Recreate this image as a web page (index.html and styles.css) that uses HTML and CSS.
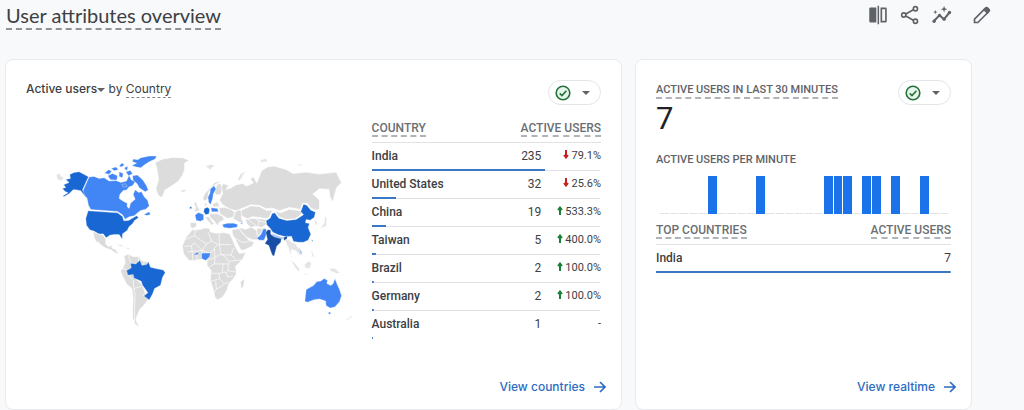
FILE: index.html
```html
<!DOCTYPE html>
<html lang="en">
<head>
<meta charset="utf-8">
<title>User attributes overview</title>
<meta name="viewport" content="width=device-width, initial-scale=1">
<link rel="stylesheet" href="styles.css">
</head>
<body>
<div class="page">
  <header class="page-header">
    <h1 class="page-title">User attributes overview</h1>
    <div class="toolbar">
      <button class="icon-button" type="button" aria-label="Edit comparisons">
        <svg viewBox="0 0 24 24"><path d="M3 3h7v18H3a1.500 1.500 0 0 1-1.500-1.500v-15A1.500 1.500 0 0 1 3 3zM11.500 1h1.800v22h-1.800zM15 3h6a1.500 1.500 0 0 1 1.500 1.500v15A1.500 1.500 0 0 1 21 21h-6zm2 2v14h3.500V5z"/></svg>
      </button>
      <button class="icon-button" type="button" aria-label="Share this report">
        <svg viewBox="0 0 24 24" class="line-icon"><circle cx="18.500" cy="4.500" r="2.500"/><circle cx="4.500" cy="12" r="2.500"/><circle cx="18.500" cy="19.500" r="2.500"/><path d="M7 10.800l9-5M7 13.200l9 5"/></svg>
      </button>
      <button class="icon-button" type="button" aria-label="Insights">
        <svg viewBox="0 0 24 24"><path d="M2 19.500L9 12.500l5.500 4.500L21 9" fill="none" stroke="currentColor" stroke-width="2.400"/><circle cx="2.500" cy="19.500" r="2"/><circle cx="9" cy="12.500" r="2"/><circle cx="14.500" cy="17" r="2"/><circle cx="21" cy="9" r="2"/><path d="M14.500 1l1 3 3 1-3 1-1 3-1-3-3-1 3-1zM4 6l.7 1.800 1.800.7-1.800.7L4 11l-.7-1.800-1.800-.7 1.800-.7z"/></svg>
      </button>
      <button class="icon-button icon-button-edit" type="button" aria-label="Customize report">
        <svg viewBox="0 0 24 24" class="line-icon"><path d="M3 21v-4L16.500 3.500a1.500 1.500 0 0 1 2 0l2 2a1.500 1.500 0 0 1 0 2L7 21z"/><path d="M14.500 5.500l4 4 2-3-3-3z" fill="currentColor"/></svg>
      </button>
    </div>
  </header>

  <main class="cards">
    <section class="card">
      <div class="card-head">
        <h2 class="card-title"><button class="metric-button" type="button">Active users<span class="caret"></span></button> by <span class="hint">Country</span></h2>
        <button class="status-button" type="button" aria-label="Data quality">
          <svg viewBox="0 0 16 16" class="check"><circle cx="8" cy="8" r="6.800"/><path d="M4.700 8.300l2.300 2.200 4.400-4.700"/></svg>
          <span class="caret"></span>
        </button>
      </div>
      <div class="country-body">
        <svg class="map" viewBox="27 121 325 224" role="img" aria-label="Active users by country">
          <!-- North America -->
          <g transform="translate(50 145) scale(.3333)">
            <path class="land faint" d="M22 88L30 84 38 94 46 98 36 108 24 102Z"/>
            <path class="strong" d="M62 88L75 82 90 80 118 95 100 135 114 150 110 156 95 137 80 134 72 134 60 146 44 155 42 152 57 143 48 139 40 130 50 127 44 119 60 112 50 103 64 100Z"/>
            <path class="mid" d="M120 96L135 94 150 100 165 98 180 108 200 106 215 112 232 108 240 90 246 104 258 110 250 122 240 125 232 135 222 136 212 148 210 160 222 168 234 174 234 185 240 190 244 174 258 162 252 148 258 134 268 142 277 140 285 155 295 165 300 182 290 192 274 196 264 204 255 212 240 215 228 222 220 209 205 199 175 197 125 193 118 180 114 160 106 148 102 136Z"/>
            <path class="mid" d="M250 92L264 90 274 98 282 106 292 122 297 135 288 140 270 128 264 116 252 106ZM248 62L262 54 250 50 252 42 266 44 275 38 300 33 322 33 318 42 300 50 285 60 275 68 262 66ZM176 92L190 85 205 92 203 105 184 104ZM166 84L178 74 188 78 180 88ZM210 80L222 85 220 98 210 94ZM230 80L244 76 250 86 238 92ZM186 70L200 66 208 73 196 77ZM210 62L219 54 226 60 216 66ZM228 66L236 64 234 76 226 72ZM218 118L230 116 234 124 222 126ZM284 208L300 200 304 208 292 211Z"/>
            <path class="strong" d="M117 197L205 203 220 214 224 227 238 226 252 218 262 212 268 218 256 226 250 236 240 244 234 256 220 266 219 282 210 268 195 268 182 270 171 278 162 266 148 267 135 258 122 254 112 240 110 220Z"/>
          </g>
          <!-- Central and South America -->
          <g transform="translate(90 235) scale(.3333)">
            <path class="land" d="M12-12L28-4 42 0 50 12 50 26 58 34 70 30 68 38 78 42 88 54 80 54 66 44 50 39 36 30 24 18 22 24 14 4ZM80 28L94 28 108 36 96 34ZM112 36L122 38 120 42 112 41Z"/>
            <path class="land" d="M104 62L118 56 130 64 150 64 156 76 180 80 180 96 140 120 140 130 160 150 170 180 178 190 172 200 162 212 152 222 146 236 140 250 144 264 152 274 138 268 130 248 130 220 132 190 128 160 112 146 100 122 94 108 102 96 108 80Z"/>
            <path class="border" d="M118 58L122 76 128 88M98 98L116 106M116 118L132 136 134 160 138 180 136 220 136 262M134 160L160 152M148 66L148 80M164 78V90M160 178L170 184"/>
            <path class="strong" d="M112 106L126 98 124 84 140 86 152 75 158 90 172 88 178 80 184 96 200 100 222 104 228 112 220 126 214 150 196 160 190 176 180 194 164 182 176 172 166 158 160 150 156 138 134 128 132 118 116 120Z"/>
          </g>
          <!-- Greenland and northern Europe -->
          <g transform="translate(150 145) scale(.3333)">
            <path class="land" d="M18 52L40 42 70 37 100 38 120 46 106 54 106 74 100 90 88 108 68 122 48 134 38 158 26 150 20 130 28 104 24 76Z"/>
            <path class="land faint" d="M92 136L106 132 112 138 98 142ZM168 62L185 58 198 60 182 74Z"/>
            <path class="land" d="M134 176L140 168 144 182 152 196 134 200 140 188ZM160 160L166 146 180 130 196 112 216 108 200 118 186 126 178 142 176 160 166 168ZM202 120L212 114 220 130 214 148 200 150 196 142ZM166 172L172 174 172 184 166 182Z"/>
            <path class="mid" d="M183 132L194 122 200 132 192 146 190 160 184 178 178 172 176 156 182 144Z"/>
            <path class="strong" d="M121 186L127 184 127 190 121 191Z"/>
          </g>
          <!-- Africa, Europe and the Middle East -->
          <g transform="translate(175 205) scale(.3333)">
            <path class="land" d="M48 52L66 52 68 62 56 70 48 66ZM92 36L104 34 112 48 120 56 112 60 98 44ZM104 26L130 26 146 34 150 44 134 52 130 62 118 46 108 38ZM134 8L150 6 170 12 184 24 178 36 160 40 150 34 136 26ZM114-4L130-10 136 4 118 6ZM180 20L196 14 212 20 200 36 208 52 196 52 176 40Z"/>
            <path class="land" d="M172 74L192 70 206 84 222 104 240 112 232 124 206 136 198 132 186 108 176 92ZM192 66L212 72 232 66 252 80 250 104 234 104 216 96 204 84Z"/>
            <path class="land" d="M54 74L72 74 94 68 106 70 108 80 126 84 148 82 166 86 172 98 184 126 194 144 214 142 206 160 184 184 186 206 176 222 164 234 158 254 146 274 130 284 122 276 116 250 108 226 110 196 98 180 98 166 90 160 60 166 44 166 28 146 24 122 34 98Z"/>
            <path class="land" d="M198 230L211 220 208 242 200 252Z"/>
            <path class="border" d="M64 74L60 92 30 104M60 92L96 116 112 108 102 82M112 108L136 120 134 86M136 118H170M30 124L52 122 60 112 84 136 96 116M84 136L82 160M52 122L56 166M68 140V166M40 140L60 138 84 136 108 144 120 130 130 118M120 130L122 156 136 148 148 150M136 120L140 148 170 150 178 128M98 166L122 156M148 150L164 168 200 164M164 168L160 196 182 200M122 156L120 176 106 184M120 176H160M108 204H134L136 220 110 228M134 204L156 200 160 216 176 212M136 220L150 236 162 230M124 228L126 252 140 244 150 236M126 252L118 262M146 176L144 202M170 150L184 160M178 96L204 112M204 112L226 108"/>
            <path class="mid" d="M62 30L72 22 88 28 88 44 78 48 66 46ZM110 8L130 10 132 20 112 20ZM144 58L160 54 178 54 190 58 188 66 166 69 148 67ZM198 53H205L203 58ZM82 144L108 143 106 154 94 166 82 160Z"/>
            <path class="mid" d="M58 150L64 144 71 140 73 147Z"/>
            <path class="strong" d="M90 10L100 6 106 12 104 26 94 29 88 20Z"/>
          </g>
          <!-- Asia -->
          <g transform="translate(240 150) scale(.3333)">
            <path class="land" d="M-54 110L-48 100-32 106-40 118-26 114-10 104 10 100 22 108 42 98 32 86 42 80 52 98 58 84 66 62 86 50 104 48 140 58 160 70 200 66 240 72 290 66 306 98 292 112 286 130 280 156 272 142 268 118 240 116 220 132 240 150 240 178 228 180 214 174 204 160 188 160 184 178 150 172 120 182 100 174 80 176 60 166 34 164 10 174-10 182-30 176-50 164-60 150-50 130Z"/>
            <path class="land faint" d="M-6 90L2 72 22 62 12 74 2 92ZM62 30L80 25 86 34 66 37ZM168 43L188 42 186 48ZM256 196L262 204 260 228 242 236 254 218ZM224 208L232 214 234 224 228 226Z"/>
            <path class="land" d="M4 182L34 167 60 169 80 180 100 180 92 196 84 206 60 202 40 200 24 206 8 198ZM106 182L124 188 150 177 186 182 188 190 168 206 140 208 118 200ZM18 208L38 204 60 206 80 208 80 224 66 232 50 228 34 232 22 220ZM52 234L72 234 60 256 52 252Z"/>
            <path class="border" d="M24 206L50 226M40 200L60 214 80 216M60 206L56 228"/>
            <path class="strong" d="M80 212L92 204 98 190 106 188 118 204 142 211 170 208 192 194 184 184 192 162 202 165 214 180 228 186 224 202 212 210 200 208 198 218 210 220 206 232 214 252 206 270 192 276 178 276 162 274 156 258 140 260 116 254 100 246 92 234 82 224ZM216 268L220 270 218 276Z"/>
            <path class="light" d="M97 250L126 261 134 262 124 269 102 261Z"/>
            <path class="mid" d="M52 264L64 254 72 236 80 236 82 250 74 270 60 270Z"/>
            <path class="dark" d="M79 246L86 238 94 240 94 252 104 260 126 266 124 276 112 288 104 318 98 314 88 286 76 280 84 268ZM132 262L144 257 142 268 134 272Z"/>
          </g>
          <!-- South-east Asia and Oceania -->
          <g transform="translate(220 230) scale(.3333)">
            <path class="land faint" d="M196 30L206 26 216 36 228 40 236 52 246 66 240 76 230 62 216 58 214 76 222 88 214 80 208 56ZM212 88L226 98 240 116 240 126 228 114ZM254 104L266 92 276 98 272 114 258 114ZM240 128L262 130 262 134ZM328 114L346 114 362 128 352 130 336 124ZM274 60L280 66 286 84 278 78ZM406 238L418 242 408 252ZM378 268L400 254 398 260 382 270Z"/>
            <path class="light" d="M238 52L248 66 244 76 242 66Z"/>
            <path class="mid" d="M260 178L282 166 292 154 304 152 314 145 324 150 322 160 334 166 341 160 346 145 352 160 360 178 366 196 360 214 346 230 332 233 320 226 318 212 300 206 284 208 264 216 256 213 258 196ZM326 246H334L332 252H328Z"/>
          </g>
        </svg>

        <table class="data-table">
          <thead>
            <tr><th scope="col"><span class="hint">COUNTRY</span></th><th scope="col" colspan="2" class="num"><span class="hint">ACTIVE USERS</span></th></tr>
          </thead>
          <tbody>
            <tr style="--share:76%"><th scope="row">India</th><td class="num">235</td><td class="change"><svg class="down" viewBox="0 0 6 9"><path d="M3 0v7M1 5l2 2.500L5 5"/></svg>79.1%</td></tr>
            <tr style="--share:10.5%"><th scope="row">United States</th><td class="num">32</td><td class="change"><svg class="down" viewBox="0 0 6 9"><path d="M3 0v7M1 5l2 2.500L5 5"/></svg>25.6%</td></tr>
            <tr style="--share:6.2%"><th scope="row">China</th><td class="num">19</td><td class="change"><svg class="up" viewBox="0 0 6 9"><path d="M3 9V2M1 4l2-2.500L5 4"/></svg>533.3%</td></tr>
            <tr style="--share:1.7%"><th scope="row">Taiwan</th><td class="num">5</td><td class="change"><svg class="up" viewBox="0 0 6 9"><path d="M3 9V2M1 4l2-2.500L5 4"/></svg>400.0%</td></tr>
            <tr style="--share:0.8%"><th scope="row">Brazil</th><td class="num">2</td><td class="change"><svg class="up" viewBox="0 0 6 9"><path d="M3 9V2M1 4l2-2.500L5 4"/></svg>100.0%</td></tr>
            <tr style="--share:0.8%"><th scope="row">Germany</th><td class="num">2</td><td class="change"><svg class="up" viewBox="0 0 6 9"><path d="M3 9V2M1 4l2-2.500L5 4"/></svg>100.0%</td></tr>
            <tr style="--share:0.4%"><th scope="row">Australia</th><td class="num">1</td><td class="change">-</td></tr>
          </tbody>
        </table>
      </div>
      <a class="card-link" href="#countries">View countries<svg viewBox="0 0 12 12"><path d="M0 6h11M6 1l5 5-5 5"/></svg></a>
    </section>

    <section class="card">
      <div class="card-head">
        <h2 class="label"><span class="hint">ACTIVE USERS IN LAST 30 MINUTES</span></h2>
        <button class="status-button" type="button" aria-label="Data quality">
          <svg viewBox="0 0 16 16" class="check"><circle cx="8" cy="8" r="6.800"/><path d="M4.700 8.300l2.300 2.200 4.400-4.700"/></svg>
          <span class="caret"></span>
        </button>
      </div>
      <p class="big-number">7</p>
      <h3 class="label">ACTIVE USERS PER MINUTE</h3>
      <div class="minutes" role="img" aria-label="Active users per minute">
        <i></i><i></i><i></i><i></i><i></i><i class="on"></i><i></i><i></i><i></i><i></i><i class="on"></i><i></i><i></i><i></i><i></i><i></i><i></i><i class="on"></i><i class="on"></i><i class="on"></i><i></i><i class="on"></i><i class="on"></i><i></i><i class="on"></i><i></i><i></i><i class="on"></i><i></i><i></i>
      </div>
      <table class="data-table">
        <thead>
          <tr><th scope="col"><span class="hint">TOP COUNTRIES</span></th><th scope="col" class="num"><span class="hint">ACTIVE USERS</span></th></tr>
        </thead>
        <tbody>
          <tr style="--share:100%"><th scope="row">India</th><td class="num">7</td></tr>
        </tbody>
      </table>
      <a class="card-link" href="#realtime">View realtime<svg viewBox="0 0 12 12"><path d="M0 6h11M6 1l5 5-5 5"/></svg></a>
    </section>
  </main>
</div>
</body>
</html>
```
FILE: styles.css
```css
* { box-sizing: border-box; }

body {
  margin: 0;
  background: #f8f9fb;
  color: #3c4043;
  font-family: Roboto, "Liberation Sans", sans-serif;
  font-size: 12px;
}

h1, h2, h3, p { margin: 0; font-weight: 400; }

button {
  padding: 0;
  border: 0;
  background: none;
  color: inherit;
  font: inherit;
  cursor: pointer;
}

.page {
  display: flex;
  flex-direction: column;
  min-height: 100vh;
  padding: 4px 52px 0 5px;
}

.page-header {
  display: flex;
  align-items: flex-start;
  justify-content: space-between;
  height: 55px;
  padding-right: 10px;
}

.page-title {
  padding: 0 0 2px;
  margin-left: 1px;
  border-bottom: 2px dashed #8f9296;
  font-family: Lato, sans-serif;
  font-size: 20px;
  line-height: 22px;
}

.toolbar { display: flex; gap: 12px; margin-right: -30px; color: #5f6368; }
.icon-button { width: 20px; height: 22px; }
.icon-button svg { display: block; width: 20px; height: 20px; fill: currentColor; }
.icon-button .line-icon { fill: none; stroke: currentColor; stroke-width: 2; }
.icon-button-edit { margin-left: 8px; }

.cards {
  display: grid;
  flex: 1;
  grid-template-columns: 617fr 337fr;
  gap: 13px;
}

.card {
  display: flex;
  flex-direction: column;
  padding: 20px 20px 14px;
  border: 1px solid #e8eaed;
  border-radius: 8px;
  background: #fff;
}

.card-head {
  display: flex;
  align-items: flex-start;
  justify-content: space-between;
}

.card-title {
  font-family: Inter, sans-serif;
  font-size: 12px;
  line-height: 18px;
}

.metric-button { font-weight: 500; }
.hint { border-bottom: 1px dashed #80868b; }
.card-title .hint { display: inline-block; line-height: 17px; }

.caret {
  display: inline-block;
  border: 4px solid transparent;
  border-top-color: #5f6368;
  border-bottom: 0;
  vertical-align: middle;
}

.status-button {
  display: flex;
  align-items: center;
  justify-content: space-between;
  width: 53px;
  height: 25px;
  padding: 0 10px 0 6px;
  border: 1px solid #e3e5e8;
  border-radius: 13px;
}

.check { width: 16px; height: 16px; fill: #e6f4ea; stroke: #24713a; stroke-width: 1.6; }
.check path { fill: none; }

.country-body {
  display: grid;
  grid-template-columns: 325fr 229fr;
  gap: 20px;
  align-items: start;
  padding-top: 16px;
}

.map { display: block; width: 100%; }
.land { fill: #dcdcdc; stroke: #fff; stroke-width: 2; }
.faint { fill: #e4e4e4; }
.border { fill: none; stroke: #fff; stroke-width: 2; }
.light { fill: #a9c7f7; }
.mid { fill: #4285f4; stroke: #fff; stroke-width: 1; }
.strong { fill: #1967d2; stroke: #fff; stroke-width: 1; }
.dark { fill: #174ea6; stroke: #fff; stroke-width: 1; }

.label {
  color: #5f6368;
  font-size: 11px;
  font-weight: 500;
  line-height: 14px;
}
.label .hint { display: inline-block; border-bottom-width: 2px; border-color: #b0b3b7; }
.card-head .label { padding-top: 3px; }

.data-table { width: 100%; border-spacing: 0; line-height: 16px; }
.data-table th, .data-table td { height: 28px; padding: 0 0 2px; text-align: left; }
.data-table tbody tr {
  background:
    linear-gradient(#3b78c4, #3b78c4) left bottom / var(--share) 2px no-repeat,
    linear-gradient(#e0e2e5, #e0e2e5) left bottom / 100% 1px no-repeat;
}
.country-body tbody tr:last-child {
  background: linear-gradient(#3b78c4, #3b78c4) left bottom / var(--share) 2px no-repeat;
}
.data-table thead th {
  height: 22px;
  padding: 0;
  border-bottom: 1px solid #e0e2e5;
  color: #6b6f74;
  font-size: 12px;
  font-weight: 500;
  line-height: 14px;
  vertical-align: top;
}
.data-table thead .hint { display: inline-block; border-bottom-width: 2px; border-color: #b0b3b7; line-height: 14px; }
.data-table tbody th { font-weight: 500; }
.data-table .num { text-align: right; }
.data-table .change { width: 26%; font-size: 11px; text-align: right; white-space: nowrap; }

.change svg { width: 6px; height: 9px; margin-right: 2px; fill: none; stroke-width: 2; }
.down { stroke: #c5221f; }
.up { stroke: #188038; }

.card-link {
  display: flex;
  align-items: center;
  align-self: flex-end;
  gap: 9px;
  margin: auto -5px 0 0;
  color: #2b6bc4;
  font-family: Inter, sans-serif;
  font-size: 12px;
  font-weight: 500;
  line-height: 16px;
  text-decoration: none;
}
.card-link svg { width: 12px; height: 12px; fill: none; stroke: currentColor; stroke-width: 1.6; }

.big-number {
  margin-bottom: 20px;
  color: #202124;
  font-size: 31px;
  line-height: 28px;
}

.minutes {
  display: flex;
  gap: 1px;
  align-items: flex-end;
  height: 38px;
  margin: 9px 3px 9px 4px;
}
.minutes i { flex: 1; height: 1px; background: #e0e2e5; }
.minutes .on { height: 100%; background: #1a73e8; }
```
